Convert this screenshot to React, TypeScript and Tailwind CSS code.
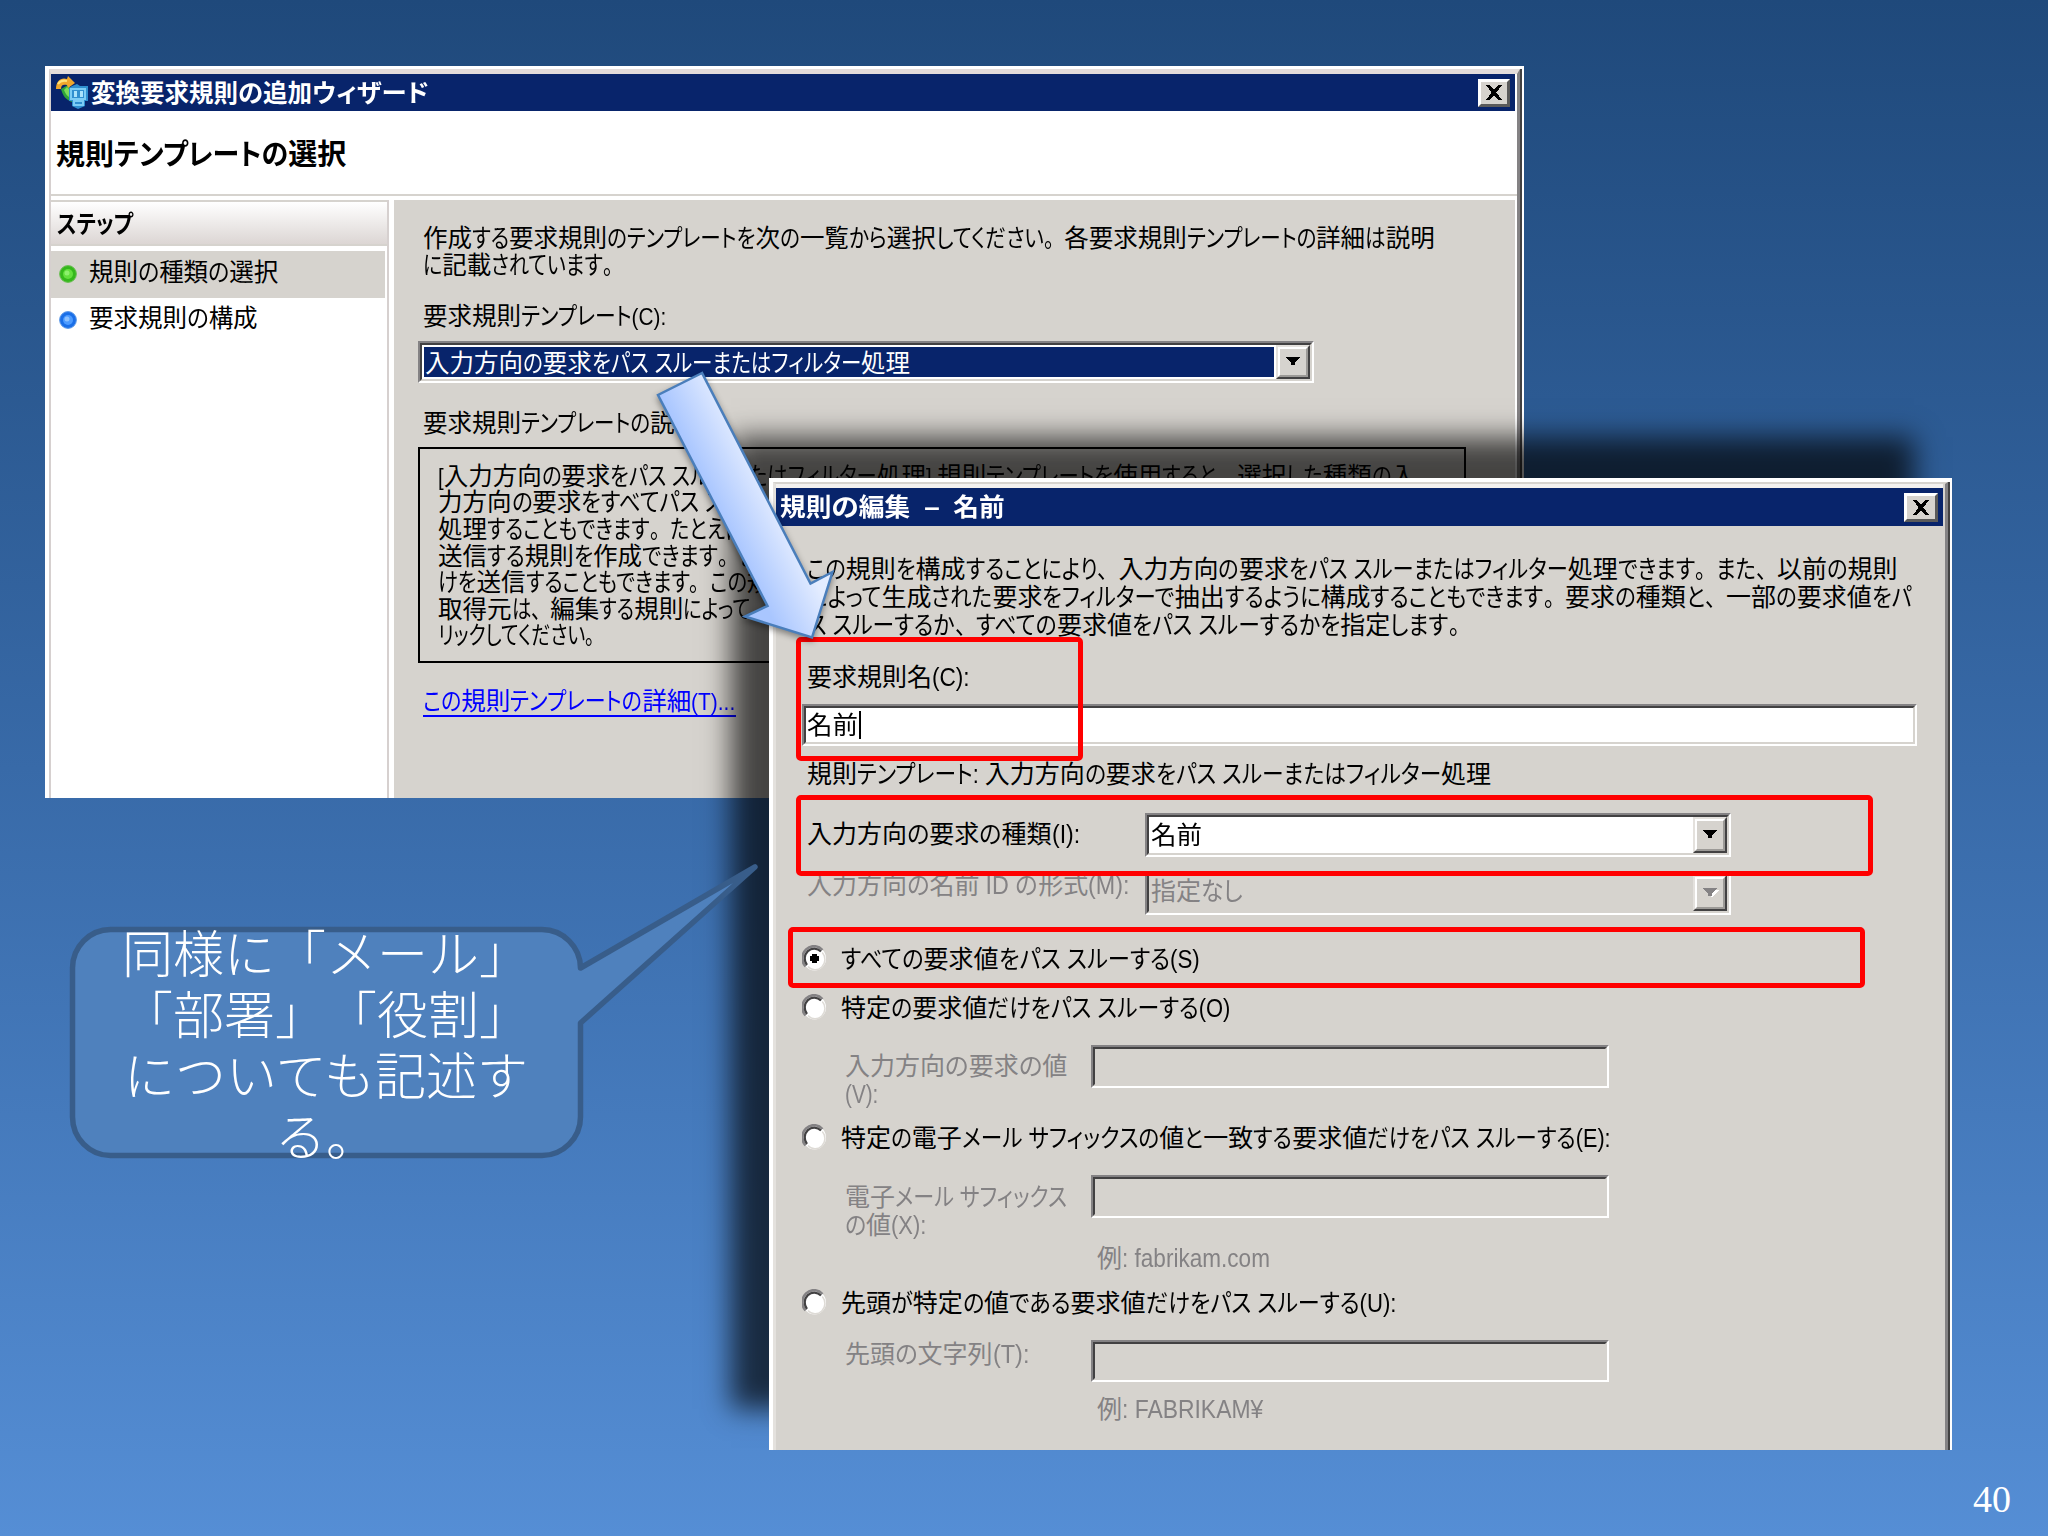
import React, { useLayoutEffect, useRef } from 'react';

const uiFont = 'font-["Liberation_Sans","Noto_Sans_CJK_JP",sans-serif]';

const kindOf = (ch: string) => {
  if (/[\u4e00-\u9fff]/.test(ch)) return 'kanji';
  if (/[。、]/.test(ch)) return 'mark';
  return 'kana';
};

const splitRuns = (text: string) => {
  const runs: { kind: string; text: string }[] = [];
  for (const ch of text) {
    const last = runs[runs.length - 1];
    if (last && last.kind === kindOf(ch)) last.text += ch;
    else runs.push({ kind: kindOf(ch), text: ch });
  }
  return runs;
};

// One line of UI text: kanji keep their width, everything else is condensed to fill w
function Line({ text, w, className = '' }: { text: string; w: number; className?: string }) {
  const ref = useRef<HTMLSpanElement>(null);

  useLayoutEffect(() => {
    const el = ref.current;
    if (!el) return;
    const narrow = Array.from(el.querySelectorAll<HTMLElement>('[data-narrow]'));
    narrow.forEach((n) => {
      n.style.width = '';
      (n.firstElementChild as HTMLElement).style.transform = '';
    });
    el.style.transform = '';
    const total = el.offsetWidth;
    const sizes = narrow.map((n) => n.getBoundingClientRect().width);
    const sum = sizes.reduce((a, b) => a + b, 0);
    const rest = total - sum;
    let k = sum ? (w - rest) / sum : 1;
    k = Math.min(1.08, Math.max(0.72, k));
    narrow.forEach((n, i) => {
      n.style.width = sizes[i] * k + 'px';
      (n.firstElementChild as HTMLElement).style.transform = `scaleX(${k})`;
    });
    el.style.transform = `scaleX(${w / (rest + sum * k)})`;
  }, [text, w]);

  return (
    <div className={`flex shrink-0 items-center whitespace-pre ${className}`} style={{ width: w }}>
      <span ref={ref} className="inline-block shrink-0 origin-left [font-feature-settings:'palt']">
        {splitRuns(text).map((run, i) =>
          run.kind === 'kanji' ? (
            <span key={i}>{run.text}</span>
          ) : (
            <span key={i} data-narrow className={run.kind === 'mark' ? 'inline-block [font-feature-settings:normal] [text-spacing-trim:space-all]' : 'inline-block'}>
              <span className="inline-block origin-left">{run.text}</span>
            </span>
          )
        )}
      </span>
    </div>
  );
}

function CloseButton({ className }: { className: string }) {
  return (
    <button className={`flex items-center justify-center border-3 border-t-white border-l-white border-r-[#5a5a5a] border-b-[#5a5a5a] bg-[#d6d3ce] ${className}`}>
      <svg width="16" height="15" viewBox="0 0 16 15" shapeRendering="crispEdges">
        <path d="M0 0h4l4 5 4-5h4l-5.500 7.500L16 15h-4l-4-5-4 5H0l5.500-7.500z" fill="#000" />
      </svg>
    </button>
  );
}

function Select({ text, w, className, selected, disabled }: { text: string; w: number; className: string; selected?: boolean; disabled?: boolean }) {
  return (
    <div className={`flex shrink-0 border-2 border-t-[#848284] border-l-[#848284] border-r-white border-b-white ${className}`}>
      <div className={`flex flex-1 border-2 border-t-[#424142] border-l-[#424142] border-r-[#d6d3ce] border-b-[#d6d3ce] ${disabled ? 'bg-[#d6d3ce]' : 'bg-white'}`}>
        <div className={`flex flex-1 items-center ${selected ? 'my-[2px] ml-[2px] mr-[2px] bg-[#08246b] pt-[2px] pl-px text-white' : 'pl-[2px]'} ${disabled ? 'pb-1' : ''}`}>
          <Line text={text} w={w} />
        </div>
        <div className="flex w-[34px] items-center justify-center border-2 border-t-[#e4e1dd] border-l-[#e4e1dd] border-r-[#424142] border-b-[#424142] bg-[#d6d3ce]">
          <div className="flex h-full w-full items-center justify-center border-2 border-t-white border-l-white border-r-[#9c9a97] border-b-[#9c9a97]">
            <svg width="18" height="12" viewBox="0 0 18 12" shapeRendering="crispEdges">
              {disabled && <path d="M4 3h14l-7 8z" fill="#fff" />}
              <path d="M2 1h14l-5 6v2H7V7z" fill={disabled ? '#848284' : '#000'} />
            </svg>
          </div>
        </div>
      </div>
    </div>
  );
}

function TextBox({ className, children }: { className: string; children?: React.ReactNode }) {
  return (
    <div className={`flex shrink-0 border-2 border-t-[#848284] border-l-[#848284] border-r-white border-b-white ${className}`}>
      <div className="flex flex-1 items-center border-2 border-t-[#424142] border-l-[#424142] border-r-[#d6d3ce] border-b-[#d6d3ce]">{children}</div>
    </div>
  );
}

function Radio({ text, w, checked, className }: { text: string; w: number; checked?: boolean; className: string }) {
  return (
    <div className={`flex h-7 shrink-0 items-center ${className}`}>
      <svg width="25" height="28" viewBox="0 0 25 28" className="mr-[14px]">
        <ellipse cx="12.500" cy="13.500" rx="11.500" ry="12" fill="#fff" />
        <path d="M3.500 21.500A11.500 12 0 0 1 20.500 5" fill="none" stroke="#848284" strokeWidth="2.500" />
        <path d="M5 20A9.500 10 0 0 1 19 6.500" fill="none" stroke="#424142" strokeWidth="2.200" />
        <path d="M20.300 7.500A9.500 10 0 0 1 6 21.500" fill="none" stroke="#dedbd6" strokeWidth="1.500" />
        {checked && <path d="M10 9h5v2h2v5h-2v2h-5v-2H8v-5h2z" fill="#000" />}
      </svg>
      <Line text={text} w={w} />
    </div>
  );
}

function WizardIcon() {
  return (
    <svg width="34" height="34" viewBox="0 0 34 34">
      <path d="M6 13c2 7 5 11 11 13l2-10-6-7z" fill="#2fa53a" />
      <path d="M9 14c2 5 4 7 7 8l1-6-5-5z" fill="#7ddc5a" />
      <path d="M1 13C1 5 6 1 12 3l1-3 7 7-7 5-1-3c-4-1-6 0-6 4z" fill="#f0a72c" />
      <path d="M3 8c2-3 5-4 9-3" fill="none" stroke="#ffe27a" strokeWidth="2" />
      <path d="M14 12l3-2 5-2 3 2h8v15h-3v5l-7 3-6-3v-5h-3z" fill="#2f8fd0" />
      <path d="M16 13h14v10H16zM19 25h9v4h-9z" fill="none" stroke="#7cccf5" strokeWidth="2" />
      <path d="M19 15h3v6h-3zM25 15h3v6h-3z" fill="#a9e2fb" />
    </svg>
  );
}

function Step({ text, w, green, className }: { text: string; w: number; green?: boolean; className: string }) {
  return (
    <div className={`flex items-center pl-2 ${className}`}>
      <svg width="18" height="18" viewBox="0 0 18 18" className="mt-[3px] mr-3">
        <circle cx="9" cy="9" r="8.400" fill={green ? '#35b81c' : '#1a6fe8'} stroke={green ? '#6cbf55' : '#5f9be8'} />
        <circle cx="9" cy="9" r="5" fill={green ? '#63df3d' : '#4c9bff'} />
        <circle cx="8" cy="8" r="2.500" fill={green ? '#8df06d' : '#8cc1ff'} />
      </svg>
      <Line text={text} w={w} />
    </div>
  );
}

const description = [
  { text: '[入力方向の要求をパス スルーまたはフィルター処理] 規則テンプレートを使用すると、選択した種類の入', w: 978 },
  { text: '力方向の要求をすべてパス スルー', w: 328 },
  { text: '処理することもできます。たとえば', w: 307 },
  { text: '送信する規則を作成できます。また', w: 340 },
  { text: 'けを送信することもできます。この規', w: 333 },
  { text: '取得元は、編集する規則によって', w: 313 },
  { text: 'リックしてください。', w: 166 },
];

function WizardWindow() {
  return (
    <div className="absolute top-[66px] left-[45px] flex h-[732px] w-[1479px] border-t-3 border-r-2 border-l-4 border-white text-[24.5px] leading-[27px] text-black">
      <div className="flex flex-1 border-r-2 border-[#424142]">
        <div className="flex flex-1 flex-col border-t-[5px] border-r-3 border-l-2 border-t-[#e3dcdb] border-r-[#848284] border-l-[#d6d0cf] bg-white">
          <div className="mr-[2px] flex h-[37px] shrink-0 items-center bg-[#08246b] pl-1 text-white">
            <WizardIcon />
            <Line text="変換要求規則の追加ウィザード" w={338} className="ml-[2px] pt-px font-bold" />
            <CloseButton className="mr-[5px] ml-auto h-7 w-8" />
          </div>
          <div className="flex h-[85px] shrink-0 items-center border-b-2 border-[#d6d3ce] pt-[6px] pl-[5px] text-[29px]">
            <Line text="規則テンプレートの選択" w={290} className="font-bold" />
          </div>
          <div className="mt-1 flex flex-1">
            <div className="w-[338px] border-r-2 border-[#d6d0cf]">
              <div className="flex h-[46px] items-center border-t-2 border-b-2 border-[#d6d3ce] bg-linear-to-b from-white to-[#dcd6d4] pt-[3px] pl-1.5">
                <Line text="ステップ" w={76} className="font-bold" />
              </div>
              <Step text="規則の種類の選択" w={189} green className="mt-[5px] mr-[2px] h-[47px] bg-[#d6d3ce] pb-[5px]" />
              <Step text="要求規則の構成" w={169} className="h-[41px]" />
            </div>
            <div className="ml-[5px] mr-[2px] flex flex-1 flex-col bg-[#d6d3ce] pt-[25px] pl-6">
              <Line text="作成する要求規則のテンプレートを次の一覧から選択してください。各要求規則テンプレートの詳細は説明" w={1012} className="ml-[5px]" />
              <Line text="に記載されています。" w={200} className="ml-[5px]" />
              <Line text="要求規則テンプレート(C):" w={243} className="mt-6 ml-[5px]" />
              <Select text="入力方向の要求をパス スルーまたはフィルター処理" w={485} selected className="mt-[11px] h-[42px] w-[896px]" />
              <Line text="要求規則テンプレートの説明:" w={282} className="mt-[27px] ml-[5px]" />
              <div className="mt-[10px] h-[216px] w-[1048px] overflow-hidden border-2 border-black pt-[14px] pl-[18px]">
                {description.map((item, index) => (
                  <Line key={index} text={item.text} w={item.w} className="h-[26.600px]" />
                ))}
              </div>
              <Line text="この規則テンプレートの詳細(T)..." w={313} className="mt-[25px] ml-[5px] border-b-2 border-[#0000ff] text-[#0000ff]" />
            </div>
          </div>
        </div>
      </div>
    </div>
  );
}

function RuleWindow() {
  return (
    <div className="absolute top-[478px] left-[769px] flex h-[972px] w-[1183px] border-t-4 border-r-2 border-l-4 border-white text-[25px] leading-7 text-black shadow-[-38px_-41px_26px_rgba(0,0,0,0.68)]">
      <div className="flex flex-1 border-r-2 border-[#424142]">
        <div className="flex flex-1 flex-col border-t-2 border-r-3 border-l-3 border-t-[#d6d3ce] border-r-[#848284] border-l-[#e4e1dd] bg-[#d6d3ce]">
          <div className="mr-[2px] flex h-[42px] shrink-0 items-center border-t-4 border-[#f3f1ef] bg-[#08246b] pl-1 text-white">
            <Line text={'規則の編集\u2002–\u2002名前'} w={225} className="font-bold" />
            <CloseButton className="mr-[5px] ml-auto h-[29px] w-[34px]" />
          </div>
          <div className="flex flex-col pl-[26px]">
            <Line text="この規則を構成することにより、入力方向の要求をパス スルーまたはフィルター処理できます。また、以前の規則" w={1091} className="mt-[29px] ml-[5px]" />
            <Line text="によって生成された要求をフィルターで抽出するように構成することもできます。要求の種類と、一部の要求値をパ" w={1105} className="ml-[5px]" />
            <Line text="ス スルーするか、すべての要求値をパス スルーするかを指定します。" w={663} className="ml-[5px]" />
            <Line text="要求規則名(C):" w={163} className="mt-6 ml-[5px]" />
            <TextBox className="mt-[13px] h-[42px] w-[1115px] bg-white">
              <Line text="名前" w={51} className="ml-px" />
              <div className="ml-px h-7 w-[2px] bg-black" />
            </TextBox>
            <Line text="規則テンプレート: 入力方向の要求をパス スルーまたはフィルター処理" w={684} className="mt-[14px] ml-[5px]" />
            <div className="mt-[25px] flex h-11 items-center pl-[5px]">
              <Line text="入力方向の要求の種類(I):" w={273} className="pb-[3px]" />
              <Select text="名前" w={51} className="ml-[65px] h-11 w-[586px]" />
            </div>
            <div className="mt-[14px] flex h-11 items-start pl-[5px] text-[#848284]">
              <Line text="入力方向の名前 ID の形式(M):" w={323} />
              <Select text="指定なし" w={92} disabled className="ml-[15px] h-11 w-[586px]" />
            </div>
            <Radio text="すべての要求値をパス スルーする(S)" w={358} checked className="mt-[30px]" />
            <Radio text="特定の要求値だけをパス スルーする(O)" w={390} className="mt-[21px]" />
            <div className="mt-[23px] flex h-[79px] items-start pl-[43px] text-[#848284]">
              <div className="w-[246px] pt-[7px]">
                <Line text="入力方向の要求の値" w={222} />
                <Line text="(V):" w={33} />
              </div>
              <TextBox className="h-[43px] w-[518px]" />
            </div>
            <Radio text="特定の電子メール サフィックスの値と一致する要求値だけをパス スルーする(E):" w={770} className="" />
            <div className="mt-[23px] flex h-[97px] items-start pl-[43px] text-[#848284]">
              <div className="w-[246px] pt-2">
                <Line text="電子メール サフィックス" w={222} />
                <Line text="の値(X):" w={81} />
              </div>
              <div>
                <TextBox className="h-[43px] w-[518px]" />
                <Line text="例: fabrikam.com" w={173} className="mt-[26px] ml-1.5" />
              </div>
            </div>
            <Radio text="先頭が特定の値である要求値だけをパス スルーする(U):" w={555} className="mt-[17px]" />
            <div className="mt-[23px] flex items-start pl-[43px] text-[#848284]">
              <div className="w-[246px]">
                <Line text="先頭の文字列(T):" w={184} />
              </div>
              <div>
                <TextBox className="h-[42px] w-[518px]" />
                <Line text="例: FABRIKAM¥" w={166} className="mt-[13px] ml-1.5" />
              </div>
            </div>
          </div>
        </div>
      </div>
    </div>
  );
}

export default function App() {
  return (
    <div className={`relative h-[1536px] w-[2048px] overflow-hidden bg-linear-to-b from-[#1f497b] via-[#386aa8] to-[#558ed5] ${uiFont}`}>
      <WizardWindow />
      <RuleWindow />

      {/* highlight frames */}
      <div className="absolute top-[637px] left-[796px] h-[124px] w-[287px] rounded-[5px] border-[5.500px] border-[#ff0000]" />
      <div className="absolute top-[795px] left-[796px] h-[81px] w-[1077px] rounded-[5px] border-[5.500px] border-[#ff0000]" />
      <div className="absolute top-[927px] left-[788px] h-[61px] w-[1077px] rounded-[5px] border-[5.500px] border-[#ff0000]" />

      {/* arrow */}
      <svg className="absolute top-[360px] left-[640px] drop-shadow-[0_3px_3px_rgba(0,0,0,0.4)]" width="210" height="290" viewBox="0 0 210 290">
        <defs>
          <linearGradient id="arrowFill" gradientUnits="userSpaceOnUse" x1="75" y1="145" x2="125" y2="120">
            <stop offset="0" stopColor="#a9c6ff" />
            <stop offset="1" stopColor="#e3ecff" />
          </linearGradient>
        </defs>
        <path d="M62 13L18 35 127.500 246 105 256.500 172 277.500 192.500 212 170.500 223.500z" fill="url(#arrowFill)" stroke="#4a7ebb" strokeWidth="2.500" />
      </svg>

      {/* speech bubble */}
      <svg className="absolute top-[850px] left-[60px]" width="710" height="320" viewBox="0 0 710 320">
        <path
          d="M50.500 79.500H482C503 79.500 520.500 97 520.500 118L695 17 520.500 173V267C520.500 288 503 305.500 482 305.500H50.500C29.500 305.500 12.500 288 12.500 267V118C12.500 97 29.500 79.500 50.500 79.500z"
          fill="#4f81bd"
          stroke="#385d8a"
          strokeWidth="5.500"
          strokeLinejoin="round"
        />
      </svg>
      <div className="absolute top-[921px] left-[70px] flex h-[244px] w-[512px] flex-col items-center font-['Noto_Sans_CJK_JP',sans-serif] text-[51px] leading-[61px] font-light whitespace-pre text-white [text-spacing-trim:space-all]">
        <div>同様に「メール」</div>
        <div>「部署」「役割」</div>
        <div>についても記述す</div>
        <div>る。</div>
      </div>

      <div className="absolute top-[1477px] left-[1973px] font-['Liberation_Serif',serif] text-[38px] leading-[44px] text-white">40</div>
    </div>
  );
}
